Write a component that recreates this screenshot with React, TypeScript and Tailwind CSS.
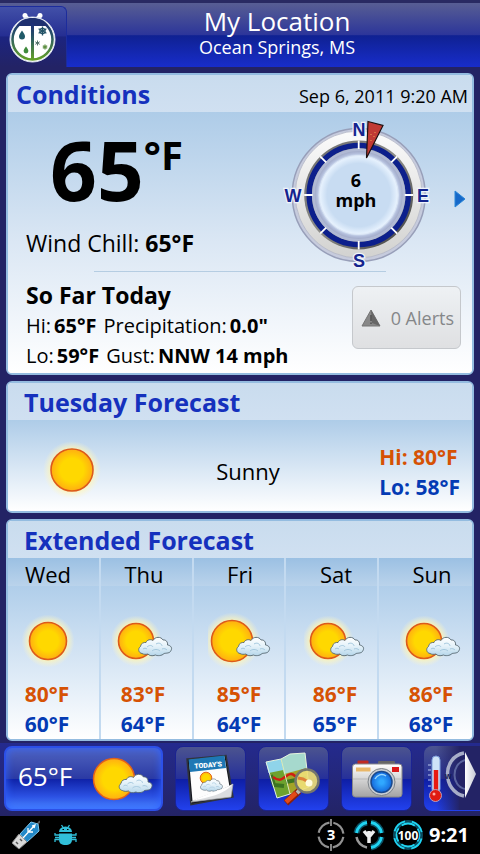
import type { ReactNode } from "react";

type Sky = "sun" | "partly" | "bright";

const days: { name: string; sky: Sky; hi: string; lo: string }[] = [
  { name: "Wed", sky: "sun", hi: "80°F", lo: "60°F" },
  { name: "Thu", sky: "partly", hi: "83°F", lo: "64°F" },
  { name: "Fri", sky: "bright", hi: "85°F", lo: "64°F" },
  { name: "Sat", sky: "partly", hi: "86°F", lo: "65°F" },
  { name: "Sun", sky: "partly", hi: "86°F", lo: "68°F" },
];

/* Gradients shared by every weather drawing on the page. */
function SharedDefs() {
  return (
    <svg className="absolute size-0" aria-hidden="true">
      <defs>
        <radialGradient id="sunFill">
          <stop offset="0.55" stopColor="#ffd800" />
          <stop offset="1" stopColor="#ffae12" />
        </radialGradient>
        <radialGradient id="sunGlow">
          <stop offset="0.7" stopColor="#fff6b0" stopOpacity="0.85" />
          <stop offset="1" stopColor="#fff6c8" stopOpacity="0" />
        </radialGradient>
        <linearGradient id="cloudFill" x1="0" y1="0" x2="0" y2="1">
          <stop offset="0" stopColor="#ffffff" />
          <stop offset="0.5" stopColor="#e3f1f9" />
          <stop offset="1" stopColor="#b5d6ea" />
        </linearGradient>
      </defs>
    </svg>
  );
}

function Sun({ x = 0, y = 0, r }: { x?: number; y?: number; r: number }) {
  return (
    <g>
      <circle cx={x} cy={y} r={r + 8} fill="url(#sunGlow)" />
      <circle cx={x} cy={y} r={r} fill="url(#sunFill)" stroke="#dc5a1c" strokeWidth="1.6" />
    </g>
  );
}

/* A cloud 34 units wide and 20 high, with its corner at the origin. */
function Cloud() {
  return (
    <g>
      <path
        d="M4 17.5C.5 17 -.5 12.500 2.500 10.500C2.500 7.500 6 6 8 6.500C9 3.500 13 3 15 4.500C17 .5 23 .3 25 4C28 3.500 30 6 29.500 9C33 9.500 34.500 12 33 14.500C32 17.500 28 17 26 17.500C24 20 19 20 17.500 19C14 20.500 11 19.500 10 18C8 18.500 5.500 18.500 4 17.500Z"
        fill="url(#cloudFill)"
        stroke="#56666f"
        strokeWidth="0.9"
      />
      <path d="M9 11c2-2 5-2 6 0M18 8c3-2 6 0 6 2M14 15c2-2 6-2 8 0M24 13c2-1 4 0 5 1M5 13c1-1 3-1 4 0" fill="none" stroke="#a4c8de" strokeWidth="1" />
    </g>
  );
}

function SkyIcon({ sky }: { sky: Sky }) {
  return (
    <svg viewBox="-32 -28 64 56" className="h-14 w-16" aria-hidden="true">
      {sky === "sun" ? (
        <Sun r={18.500} />
      ) : (
        <>
          <Sun x={-8} r={sky === "bright" ? 20.500 : 17.500} />
          <g transform={sky === "bright" ? "translate(-4 -5)" : "translate(-6 -5)"}>
            <Cloud />
          </g>
        </>
      )}
    </svg>
  );
}

function LadybugLogo() {
  return (
    <svg viewBox="8 9 50 54" className="h-[54px] w-[50px]" aria-hidden="true">
      <defs>
        <linearGradient id="bugRing" x1="0" y1="0" x2="0" y2="1">
          <stop offset="0" stopColor="#1c2c78" />
          <stop offset="0.45" stopColor="#2c5c62" />
          <stop offset="1" stopColor="#63a028" />
        </linearGradient>
      </defs>
      <path d="M29 18c-1-2-2-3-4-3M36 18c1-2 2-3 4-3" fill="none" stroke="#fff" strokeWidth="2" />
      <circle cx="25" cy="14.500" r="2.500" fill="#fff" />
      <circle cx="40" cy="14.500" r="2.500" fill="#fff" />
      <circle cx="32.500" cy="38.500" r="22.500" fill="#fff" stroke="#dfe6f0" />
      <circle cx="32.500" cy="38.500" r="20" fill="#fff" stroke="url(#bugRing)" strokeWidth="2.600" />
      <path d="M16.500 25C20 19 26 17 32.500 17S45 19 48.500 25Z" fill="#1e3070" />
      <path d="M31 22h3v36h-3z" fill="url(#bugRing)" />
      <path d="M22 29.500c2 3 3 4.500 3 6a3 3 0 0 1-6 0c0-1.500 1-3 3-6Z" fill="#205a68" />
      <path d="M26 45.500c1.700 2.500 2.400 3.500 2.400 4.500a2.400 2.400 0 0 1-4.800 0c0-1 .7-2 2.400-4.500Z" fill="#3f8a3c" />
      <g stroke="#225266" strokeWidth="1.300" fill="none">
        <path d="M42.500 25.500v9M38.600 27.800l7.800 4.500M46.400 27.800l-7.800 4.500" />
        <circle cx="42.500" cy="30" r="2.600" />
      </g>
      <path d="M37.500 39.500v5M35.300 40.800l4.400 2.500M39.700 40.800l-4.400 2.500" stroke="#52706a" />
      <path d="M45 43.500v5M42.800 44.800l4.400 2.500M47.200 44.800l-4.400 2.500" stroke="#5f9044" strokeWidth="1.300" />
    </svg>
  );
}

function Compass() {
  const labels = [
    { t: "N", x: 359, y: 136 },
    { t: "E", x: 423, y: 202 },
    { t: "S", x: 359, y: 267 },
    { t: "W", x: 293, y: 202 },
  ];
  return (
    <div className="grid h-[150px] w-[148px] items-center justify-items-center">
      <svg viewBox="284 120 148 150" className="col-start-1 row-start-1 h-[150px] w-[148px] overflow-visible" aria-hidden="true">
        <defs>
          <linearGradient id="bezel" x1="0" y1="0" x2="0" y2="1">
            <stop offset="0" stopColor="#fbfbfb" />
            <stop offset="1" stopColor="#d2d2d0" />
          </linearGradient>
          <radialGradient id="innerRim">
            <stop offset="0.88" stopColor="#dceafa" />
            <stop offset="0.94" stopColor="#b4bfdc" />
            <stop offset="1" stopColor="#a2abc9" />
          </radialGradient>
          <radialGradient id="dial">
            <stop offset="0.8" stopColor="#c8dcf2" />
            <stop offset="1" stopColor="#eaf4ff" />
          </radialGradient>
          <linearGradient id="groove" x1="0" y1="0" x2="1" y2="1">
            <stop offset="0" stopColor="#6b6b6b" />
            <stop offset="0.5" stopColor="#8c8c88" />
            <stop offset="1" stopColor="#3a3a3a" />
          </linearGradient>
        </defs>
        <circle cx="358.700" cy="195" r="66.500" fill="#c6cbdd" stroke="#989fb9" strokeWidth="1.500" />
        <circle cx="358.700" cy="194.500" r="63.500" fill="url(#bezel)" stroke="#b4b8c6" strokeWidth="0.8" />
        <circle cx="358.700" cy="195" r="54.500" fill="url(#groove)" />
        <circle cx="358.700" cy="195" r="49.500" fill="none" stroke="#0c1f8c" strokeWidth="5.500" />
        <circle cx="358.700" cy="195" r="46.800" fill="#b0b9d4" />
        <circle cx="358.700" cy="195" r="44" fill="url(#innerRim)" />
        <circle cx="358.700" cy="195" r="39.500" fill="url(#dial)" stroke="#dbe6f5" />
        <g stroke="#fff" strokeWidth="1.800">
          {[0, 45, 90, 135, 180, 225, 270, 315].map((a) => (
            <path key={a} d="M358.700 140.500V149" transform={`rotate(${a} 358.700 195)`} />
          ))}
        </g>
        <g fontFamily="Liberation Sans, sans-serif" fontWeight="700" fontSize="18" textAnchor="middle" fill="#14248e" stroke="#eef3fa" strokeWidth="2.500" paintOrder="stroke">
          {labels.map((l) => (
            <text key={l.t} x={l.x} y={l.y}>
              {l.t}
            </text>
          ))}
        </g>
        <path d="M368 121.500L383 125.500L366.500 158Z" fill="#c03a34" stroke="#1c1010" strokeWidth="1.200" />
        <path d="M371 134v1M374 136v1M371 140v1M375 132v1" stroke="#eea050" />
      </svg>
      <p className="col-start-1 row-start-1 pr-1 pb-2.5 text-center text-lg leading-5 font-bold">
        6<br />
        mph
      </p>
    </div>
  );
}

function Card({ title, aside, inset, children }: { title: string; aside?: string; inset: string; children: ReactNode }) {
  return (
    <section className="overflow-hidden rounded-md border-2 border-[#94bce0] bg-white">
      <div className={`flex h-[37px] items-center justify-between bg-linear-to-b from-[#c9dcee] to-[#d0e0f1] pr-1 ${inset}`}>
        <h2 className="text-[25px] leading-9 font-bold text-[#1531bd]">{title}</h2>
        {aside && <time className="pt-1 text-lg">{aside}</time>}
      </div>
      {children}
    </section>
  );
}

function Conditions() {
  return (
    <Card title="Conditions" aside="Sep 6, 2011 9:20 AM" inset="pl-2">
      <div className="bg-linear-to-b from-[#aecce8] via-[#dbe7f4] to-white pb-0.5">
        <div className="flex h-[159px] items-start pr-1.5 pl-[18px]">
          <div className="flex-1 pt-3.5">
            <p className="flex items-start pl-6 font-bold">
              <span className="text-[82px] leading-[86px]">65</span>
              <span className="mt-2 text-[40px] leading-[42px]">°F</span>
            </p>
            <p className="mt-[15px] text-[23px] leading-8">
              Wind Chill: <b>65°F</b>
            </p>
          </div>
          <div className="mt-2 mr-[22px]">
            <Compass />
          </div>
          <button type="button" aria-label="Next" className="mt-[78px]">
            <svg viewBox="0 0 12 18" className="h-[18px] w-3" aria-hidden="true">
              <path d="M1 1L11 9L1 17Z" fill="#1769c9" stroke="#2a86d8" />
            </svg>
          </button>
        </div>
        <hr className="mx-[86px] border-[#b5cde2]" />
        <div className="flex items-start justify-between pt-[7px] pr-[11px] pl-[18px]">
          <div className="text-xl leading-[30px]">
            <h3 className="text-[23px] leading-8 font-bold">So Far Today</h3>
            <p className="flex gap-[7px]">
              <span>
                Hi:<b className="ml-[3px]">65°F</b>
              </span>
              <span>
                Precipitation:<b className="ml-[3px]">0.0"</b>
              </span>
            </p>
            <p className="flex gap-[7px]">
              <span>
                Lo:<b className="ml-[3px]">59°F</b>
              </span>
              <span>
                Gust:<b className="ml-[3px]">NNW 14 mph</b>
              </span>
            </p>
          </div>
          <button
            type="button"
            className="mt-[7px] flex h-[63px] items-center gap-2.5 rounded-md border border-[#c5c8cc] bg-linear-to-b from-[#eef1f4] to-[#dfe0e2] pr-1.5 pl-2 text-lg text-[#858789]"
          >
            <svg viewBox="0 0 20 18" className="h-[18px] w-5" aria-hidden="true">
              <path d="M10 1L19 17H1Z" fill="#888" stroke="#757575" />
              <path d="M10 1L19 17L11 14Z" fill="#666" />
              <path d="M10 6v6M10 13.500v1.500" stroke="#505050" strokeWidth="1.500" />
            </svg>
            0 Alerts
          </button>
        </div>
      </div>
    </Card>
  );
}

function Tuesday() {
  return (
    <Card title="Tuesday Forecast" inset="pl-4">
      <div className="grid h-[91px] grid-cols-[1fr_auto_1fr] items-center bg-linear-to-b from-[#aecce8] to-white pt-3 pr-3 pl-8">
        <svg viewBox="-32 -32 64 64" className="mb-1 size-16" aria-hidden="true">
          <Sun r={21} />
        </svg>
        <p className="pr-1 text-[22px]">Sunny</p>
        <p className="justify-self-end text-[21px] leading-[30px] font-bold">
          <span className="block text-[#d65204]">Hi: 80°F</span>
          <span className="block text-[#043bb4]">Lo: 58°F</span>
        </p>
      </div>
    </Card>
  );
}

function Extended() {
  return (
    <Card title="Extended Forecast" inset="pl-4">
      <div className="grid">
        <div className="col-start-1 row-start-1 grid grid-cols-5 divide-x-2 divide-[#c3daf0]">
          {days.map((d) => (
            <div key={d.name} className="flex flex-col bg-linear-to-b from-[#a2c5e6] to-white">
              <div className="h-7 bg-linear-to-b from-[#9bc0e3] to-[#bad3eb]" />
            </div>
          ))}
        </div>
        <ul className="col-start-1 row-start-1 -mx-2 grid grid-cols-5 text-center text-[21px] leading-[30px]">
          {days.map((d) => (
            <li key={d.name} className="flex flex-col items-center font-bold">
              <h3 className="pt-px text-[22px] leading-[30px] font-normal">{d.name}</h3>
              <div className="pt-6 pb-2.5">
                <SkyIcon sky={d.sky} />
              </div>
              <span className="pr-0.5 text-[#d65204]">{d.hi}</span>
              <span className="pr-0.5 text-[#043bb4]">{d.lo}</span>
            </li>
          ))}
        </ul>
      </div>
    </Card>
  );
}

function TodayIcon() {
  return (
    <svg viewBox="184 750 54 60" className="h-[60px] w-[54px]" aria-hidden="true">
      <path d="M187 760L226 756.500L233 798L191 805.500Z" fill="#15171e" stroke="#30343c" strokeWidth="1.500" />
      <path d="M189 761L224.500 757.500L231 797L192.500 802Z" fill="#fdfdfd" />
      <path d="M188.500 760.500L224.500 756.500L226 769L190 773Z" fill="#1e78b4" />
      <text x="208" y="768.500" transform="rotate(-5 208 765)" textAnchor="middle" fontFamily="Roboto, sans-serif" fontWeight="900" fontSize="7" fill="#fff">
        TODAY'S
      </text>
      <circle cx="206" cy="779" r="5.800" fill="url(#sunFill)" stroke="#e0661c" />
      <g transform="translate(200 779) scale(.67)">
        <Cloud />
      </g>
      <path d="M191 803C205 796 220 793 233 785L231 798Z" fill="#dcdee0" stroke="#a8abb0" strokeWidth="0.7" />
      <path d="M192.500 802C205 795 220 792 233 785C224 796 208 798 192.500 802Z" fill="#fff" />
    </svg>
  );
}

function MapIcon() {
  return (
    <svg viewBox="263 751 62 60" className="h-[60px] w-[62px]" aria-hidden="true">
      <path d="M266 764L281 761L290 796L277 800Z" fill="#6ea22e" />
      <path d="M281 761L290 756L305 755L309 789L290 796Z" fill="#a3a328" />
      <path d="M266 764L281 761L283.500 772L268.500 775Z" fill="#8fd4ea" />
      <path d="M281 761L290 756L305 755L306.500 770L284 776Z" fill="#a6d9cd" />
      <path d="M271 777l3 10 10 1M286 784l20-4" fill="none" stroke="#3c7420" strokeWidth="4" />
      <path d="M273 779C280 784 282 781 285 779S291 774 295 778L301 781" fill="none" stroke="#cf1e12" strokeWidth="2.500" />
      <path d="M266 764L281 761L290 756L305 755L309 789L290 796L277 800Z" fill="none" stroke="#e4f2e2" strokeWidth="1" />
      <path d="M281 761L290 796" stroke="#dcebbb" />
      <path d="M286 805L299 793" stroke="#8c2008" strokeWidth="6.500" />
      <path d="M286 804L296 795" stroke="#e34a18" strokeWidth="4.500" />
      <path d="M297 795L300 792" stroke="#b6b6b6" strokeWidth="4" />
      <circle cx="307" cy="783" r="11.500" fill="#eede76" fillOpacity="0.92" stroke="#75766c" strokeWidth="2.500" />
      <path d="M298 780l5 1 7 4" stroke="#de8038" strokeWidth="3" fill="none" />
      <circle cx="309" cy="785" r="3.500" fill="#fffce0" />
    </svg>
  );
}

function CameraIcon() {
  return (
    <svg viewBox="350 756 54 46" className="h-[46px] w-[54px]" aria-hidden="true">
      <defs>
        <linearGradient id="cameraBody" x1="0" y1="0" x2="0" y2="1">
          <stop offset="0" stopColor="#ffffff" />
          <stop offset="1" stopColor="#a3a3a3" />
        </linearGradient>
        <radialGradient id="lens">
          <stop offset="0.2" stopColor="#30a8ff" />
          <stop offset="1" stopColor="#1468dc" />
        </radialGradient>
      </defs>
      <rect x="357.500" y="760.500" width="11" height="5" rx="1" fill="#c02a22" />
      <rect x="378" y="761" width="17" height="5" rx="1" fill="#666" />
      <rect x="352.500" y="764" width="49.500" height="33" rx="3" fill="url(#cameraBody)" stroke="#898989" />
      <path d="M353 779h48" stroke="#b8b8b8" />
      <rect x="356" y="767.500" width="14.500" height="4" fill="#e9b768" />
      <rect x="392" y="767" width="7" height="5" fill="#dc1818" />
      <circle cx="381.500" cy="782" r="13.500" fill="#c9cdd2" stroke="#7c8288" />
      <circle cx="381.500" cy="782" r="10.500" fill="url(#lens)" stroke="#19498e" strokeWidth="1.500" />
      <path d="M375 779c2-4 7-6 11-3" stroke="#9ad8ff" strokeWidth="1.500" fill="none" />
    </svg>
  );
}

function ThermometerIcon() {
  return (
    <svg viewBox="424 747 56 64" className="h-16 w-14 shrink-0" aria-hidden="true">
      <defs>
        <linearGradient id="fadeRight" x1="0" x2="1">
          <stop offset="0" stopColor="#232365" stopOpacity="0" />
          <stop offset="1" stopColor="#232365" />
        </linearGradient>
        <linearGradient id="arrowFill" x1="0" x2="1">
          <stop offset="0" stopColor="#ffffff" />
          <stop offset="1" stopColor="#c5c8d4" />
        </linearGradient>
      </defs>
      <rect x="436" y="745" width="24" height="67" fill="url(#fadeRight)" />
      <rect x="459" y="745" width="22" height="67" fill="#232365" />
      <rect x="432" y="757" width="8" height="37" rx="4" fill="#cfe4f8" stroke="#7f9fda" />
      <path d="M436 771V796" stroke="#e81a12" strokeWidth="4.500" />
      <circle cx="435.500" cy="796.500" r="6" fill="#e01a12" stroke="#b8a0ba" />
      <circle cx="434" cy="795" r="1.500" fill="#ffaaa0" />
      <path d="M428 766h3M428 771h3M428 776h3M428 781h3M428 787h3" stroke="#bcc8ee" />
      <path d="M464 754C442 758 442 792 464 797" fill="none" stroke="#a7adc8" strokeWidth="3.500" />
      <path d="M465 761C451 765 451 787 465 790" fill="none" stroke="#59639d" strokeWidth="2" />
      <text x="445" y="780" fontFamily="Liberation Sans, sans-serif" fontSize="7" fontWeight="700" fill="#10184f">
        W
      </text>
      <path d="M465 753L476 775L465 799Z" fill="url(#arrowFill)" />
    </svg>
  );
}

function NavButton({ label, children }: { label: string; children: ReactNode }) {
  return (
    <button
      type="button"
      aria-label={label}
      className="flex h-[65px] w-[71px] shrink-0 items-center justify-center overflow-hidden rounded-lg border border-[#1b2392] bg-[linear-gradient(#4c548f,#26309a_50%,#0e1ea4_51%,#2241ee)]"
    >
      {children}
    </button>
  );
}

function BottomNav() {
  return (
    <nav className="flex gap-3 overflow-hidden bg-linear-to-b from-[#242a8e] to-[#232365] pt-[3px] pb-[5px] pl-1">
      <button
        type="button"
        className="flex h-[65px] w-[159px] shrink-0 items-center justify-between rounded-lg border-2 border-[#2c50e8] bg-[linear-gradient(#5064c0,#2b3aa4_50%,#0f22a8_51%,#2c52e4_80%,#4a86ff)] pr-1.5 pl-3 text-[26px] text-white shadow-[inset_0_0_8px_#2f62ff]"
      >
        <span className="pb-1">65°F</span>
        <svg viewBox="92 753 64 54" className="h-[54px] w-16" aria-hidden="true">
          <circle cx="115" cy="780" r="20.500" fill="url(#sunFill)" stroke="#e2601a" strokeWidth="1.500" />
          <g transform="translate(119.500 774)">
            <Cloud />
          </g>
        </svg>
      </button>
      <NavButton label="Today's forecast">
        <TodayIcon />
      </NavButton>
      <NavButton label="Maps">
        <MapIcon />
      </NavButton>
      <NavButton label="Camera">
        <CameraIcon />
      </NavButton>
      <button
        type="button"
        aria-label="More"
        className="flex h-[65px] min-w-0 flex-1 overflow-hidden rounded-l-lg bg-[linear-gradient(#4c548f,#26309a_50%,#0e1ea4_51%,#2241ee)]"
      >
        <ThermometerIcon />
        <span className="h-full flex-1 bg-[#232365]" />
      </button>
    </nav>
  );
}

function StatusBar() {
  return (
    <footer className="flex h-[38px] items-center bg-black pr-[11px] pl-3 text-white">
      <svg viewBox="12 820 28 30" className="h-[30px] w-7" aria-hidden="true">
        <path d="M36 826L40 821" stroke="#555" strokeWidth="2" />
        <path d="M20 834L31 822L38 824L39 831L27 842Z" fill="#2389c8" stroke="#7cc4ec" />
        <path d="M12 843L19 834L27 842L19 849Z" fill="#dadada" stroke="#8a8a8a" />
        <path d="M16 842l2 2M20 839l2 2" stroke="#555" strokeWidth="1.500" />
        <path d="M23 838L34 826M28 832v-4M29 832h4M32 826l3-1-1 3" stroke="#fff" strokeWidth="1.300" fill="none" />
      </svg>
      <svg viewBox="54 823 23 22" className="ml-3.5 h-[22px] w-[23px]" fill="#31bfd9" aria-hidden="true">
        <path d="M59 831a6.500 5.500 0 0 1 13 0Z" />
        <path d="M59 832.500h13v6.500a5 5 0 0 1-5 5h-3a5 5 0 0 1-5-5Z" />
        <path d="M61.500 824l2 3M69.500 824l-2 3M55 841v-2.500h4M76 841v-2.500h-4M55 832v2h4M76 832v2h-4M55 836.500h4M76 836.500h-4" stroke="#31bfd9" strokeWidth="1.300" fill="none" />
        <path d="M62.500 828.500h1.500M67 828.500h1.500" stroke="#000" />
      </svg>
      <div className="ml-auto flex items-center gap-1">
        <div className="flex items-center gap-1.5">
          <svg viewBox="-16 -17 32 34" className="h-[34px] w-8" aria-hidden="true">
            <circle r="12.500" fill="none" stroke="#929292" strokeWidth="2.200" strokeDasharray="15.640 4" strokeDashoffset="-2" />
            <path d="M0-16V-9M0 16V9" stroke="#929292" strokeWidth="1.800" />
            <text y="5" textAnchor="middle" fontFamily="Open Sans, sans-serif" fontWeight="700" fontSize="15" fill="#fff">
              3
            </text>
          </svg>
          <svg viewBox="-16 -17 32 34" className="h-[34px] w-8" aria-hidden="true">
            <path d="M-12.500-2A12.600 12.600 0 0 1-2-12.500M2-12.500A12.600 12.600 0 0 1 12.500-2M12.500 2A12.600 12.600 0 0 1 2 12.500" fill="none" stroke="#0c5468" strokeWidth="6" />
            <path d="M-12.500-2A12.600 12.600 0 0 1-2-12.500M2-12.500A12.600 12.600 0 0 1 12.500-2M12.500 2A12.600 12.600 0 0 1 2 12.500" fill="none" stroke="#20d4f2" strokeWidth="2.800" />
            <path d="M-2 12.500A12.600 12.600 0 0 1-12.500 2" fill="none" stroke="#9a9a9a" strokeWidth="2.500" />
            <path d="M0 8V0M0 2L-5-4M0 2L5-4M0 1v-5" stroke="#eee" strokeWidth="3.500" fill="none" />
          </svg>
          <svg viewBox="-17 -17 34 34" className="size-[34px]" aria-hidden="true">
            <circle r="13" fill="none" stroke="#0a4c60" strokeWidth="4" />
            <circle r="14" fill="none" stroke="#20d4f2" strokeWidth="1.800" strokeDasharray="15 7" strokeDashoffset="-3.500" />
            <circle r="11.500" fill="none" stroke="#20d4f2" strokeWidth="1.800" strokeDasharray="14 4.060" strokeDashoffset="7" />
            <text y="4.500" textAnchor="middle" fontFamily="Open Sans, sans-serif" fontWeight="700" fontSize="12" fill="#fff" stroke="#000" strokeWidth="2" paintOrder="stroke">
              100
            </text>
          </svg>
        </div>
        <time className="text-xl font-bold">9:21</time>
      </div>
    </footer>
  );
}

export default function App() {
  return (
    <div className="flex min-h-screen flex-col bg-[#232365] font-['Open_Sans','Noto_Sans',sans-serif] text-black">
      <SharedDefs />
      <header className="grid border-t-[3px] border-[#292a62] bg-[linear-gradient(#585e93,#2c359a_50%,#0f2192_51%,#182dcb)]">
        <div className="col-start-1 row-start-1 mt-[3px] flex w-[67px] items-center justify-center justify-self-start rounded-tr-md border-t border-r border-[#1c2c9c] bg-[linear-gradient(#4250a8,#252e92_48%,#1c2480_50%,#232365)]">
          <LadybugLogo />
        </div>
        <div className="col-start-1 row-start-1 pt-0.5 pb-2.5 pl-[74px] text-center text-white">
          <h1 className="text-[26px] leading-8">My Location</h1>
          <p className="text-lg leading-5">Ocean Springs, MS</p>
        </div>
      </header>
      <main className="flex flex-col gap-1.5 px-1.5 pt-[6px] pb-0.5">
        <Conditions />
        <Tuesday />
        <Extended />
      </main>
      <div className="mt-auto">
        <BottomNav />
        <StatusBar />
      </div>
    </div>
  );
}
